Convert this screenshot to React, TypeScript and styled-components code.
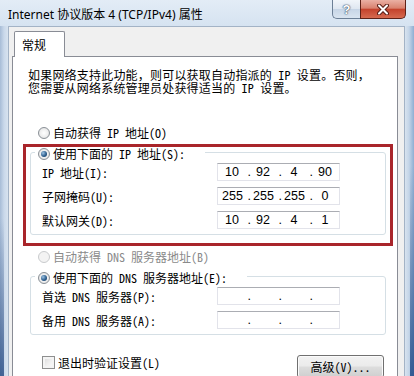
import React from "react";
import styled, { createGlobalStyle } from "styled-components";

const CJK = `"Noto Sans Mono CJK SC", "Noto Sans CJK SC", sans-serif`;

const Global = createGlobalStyle`
  html, body { margin: 0; padding: 0; background: #cfdcec; }
  body { width: 414px; height: 376px; overflow: hidden; }
  * { box-sizing: border-box; }
`;

const Window = styled.div`
  position: relative;
  width: 414px;
  height: 376px;
  overflow: hidden;
  display: flex;
  flex-direction: column;
  background: linear-gradient(180deg, #dce7f3 0%, #cddbeb 50%, #b9cce3 100%);
  font-family: ${CJK};
  font-size: 12px;
  color: #000;
`;

const TitleBar = styled.div`
  flex: none;
  height: 26px;
  display: flex;
  align-items: flex-start;
  padding: 0 8px 0 8px;
  background: linear-gradient(180deg, #e3ecf6 0%, #d6e3f1 100%);
`;

const Title = styled.div`
  flex: 1;
  margin-top: 7px;
  font-family: "Noto Sans", "Noto Sans CJK SC", sans-serif;
  font-size: 12px;
  line-height: 16px;
  color: #000;
  white-space: nowrap;
`;

const CaptionButtons = styled.div`
  display: flex;
  flex: none;
`;

const HelpButton = styled.div`
  width: 28px;
  height: 19px;
  border: 1px solid #6c7f96;
  border-top: none;
  border-right: none;
  border-bottom-left-radius: 5px;
  background: linear-gradient(180deg, #f1f5fa 0%, #dfe7f1 48%, #c7d5e6 52%, #d9e4f0 100%);
  display: flex;
  align-items: center;
  justify-content: center;
  font-family: "Liberation Sans", Arial, sans-serif;
  font-weight: bold;
  font-size: 13px;
  color: #fff;
  text-shadow: 0 0 1px #3b4d63, 0 0 1px #3b4d63, 0 0 2px #6a7a8e;
`;

const CloseButton = styled.div`
  width: 46px;
  height: 19px;
  border: 1px solid #5e2218;
  border-top: none;
  border-bottom-right-radius: 5px;
  background: linear-gradient(180deg, #eab0a4 0%, #d9826f 45%, #c4432d 52%, #d66a50 100%);
  display: flex;
  align-items: center;
  justify-content: center;
`;

const Body = styled.div`
  flex: 1;
  display: flex;
  min-height: 0;
`;

const LeftFrame = styled.div`
  flex: none;
  width: 8px;
  background:
    linear-gradient(180deg, rgba(60, 95, 145, 0) 55%, rgba(45, 80, 135, 0.85) 100%) 0 0 / 4px 100% no-repeat,
    linear-gradient(90deg, #a7bcd6 0px, #c9d8ea 4px, #d8e3ef 8px);
`;

const RightFrame = styled.div`
  flex: none;
  width: 9px;
  background:
    linear-gradient(180deg, rgba(60, 95, 145, 0) 40%, rgba(40, 80, 140, 0.9) 100%) 5px 0 / 4px 100% no-repeat,
    linear-gradient(90deg, #d8e3ef 0px, #c4d5e8 4px, #8eaed2 9px);
`;

const Client = styled.div`
  flex: 1;
  min-width: 0;
  background: #f0f0f0;
  border: 1px solid #a3b3c6;
  border-bottom: none;
  padding: 4px 6px 0 3px;
  display: flex;
  flex-direction: column;
`;

const TabStrip = styled.div`
  display: flex;
  padding-left: 2px;
  position: relative;
  z-index: 1;
  margin-bottom: -1px;
`;

const Tab = styled.div`
  width: 51px;
  height: 26px;
  background: #fff;
  border: 1px solid #898c95;
  border-bottom: none;
  border-radius: 2px 2px 0 0;
  padding-left: 7px;
  display: flex;
  align-items: center;
  font-size: 12px;
`;

const Panel = styled.div`
  flex: 1;
  background: #fff;
  border: 1px solid #898c95;
  border-bottom: none;
  display: flex;
  flex-direction: column;
`;

const Intro = styled.div`
  margin: 11px 0 0 15px;
  display: flex;
  flex-direction: column;
`;

const IntroLine = styled.div`
  height: 13px;
  line-height: 13px;
  white-space: nowrap;
  letter-spacing: 0.2px;
`;

const OptionRow = styled.div<{ $mt: number; $disabled?: boolean }>`
  display: flex;
  align-items: center;
  gap: 3px;
  height: 14px;
  line-height: 14px;
  margin: ${(p) => p.$mt}px 0 0 25px;
  color: ${(p) => (p.$disabled ? "#8a8a8a" : "#000")};
  white-space: nowrap;
`;

const Radio = styled.span<{ $checked?: boolean; $disabled?: boolean }>`
  flex: none;
  width: 12px;
  height: 12px;
  border-radius: 50%;
  border: 1px solid ${(p) => (p.$disabled ? "#c9cbcd" : "#8a9096")};
  background: ${(p) =>
    p.$disabled
      ? "#f3f3f3"
      : "radial-gradient(circle at 50% 50%, #ffffff 0, #eeeeee 55%, #d2d4d6 100%)"};
  display: flex;
  align-items: center;
  justify-content: center;
  &::after {
    content: "";
    display: ${(p) => (p.$checked ? "block" : "none")};
    width: 6px;
    height: 6px;
    border-radius: 50%;
    background: radial-gradient(circle at 35% 35%, #9cc3e3 0, #2f5f8e 55%, #0f3459 100%);
  }
`;

const Group = styled.fieldset`
  margin: 5px 11px 0 17px;
  padding: 4px 10px 5px 11px;
  border: 1px solid #d5dfe5;
  border-radius: 3px;
  min-width: 0;
`;

const Legend = styled.legend`
  margin-left: -7px;
  padding: 0 20px 0 3px;
  height: 14px;
  line-height: 14px;
`;

const LegendInner = styled.span`
  display: inline-flex;
  align-items: center;
  gap: 3px;
  height: 14px;
  white-space: nowrap;
`;

const Rows = styled.div`
  display: flex;
  flex-direction: column;
  gap: 6px;
`;

const FieldRow = styled.div`
  display: flex;
  align-items: center;
  height: 18px;
`;

const FieldLabel = styled.span`
  flex: none;
  width: 175px;
  white-space: nowrap;
`;

const IpBox = styled.div`
  flex: none;
  width: 123px;
  height: 18px;
  border: 1px solid #e2e3ea;
  border-top-color: #abadb3;
  background: #fff;
  display: flex;
  align-items: center;
  padding-left: 4px;
  font-family: "Liberation Sans", Arial, sans-serif;
  font-size: 12.5px;
  line-height: 16px;
  color: #000;
`;

const Octet = styled.span`
  width: 20px;
  text-align: center;
`;

const Dot = styled.span`
  width: 11px;
  text-align: right;
  padding-right: 2px;
`;

const Footer = styled.div`
  display: flex;
  justify-content: space-between;
  align-items: flex-start;
  margin: 20px 13px 0 29px;
`;

const CheckLabel = styled.div`
  display: flex;
  align-items: center;
  gap: 3px;
  height: 13px;
  margin-top: 1px;
  line-height: 13px;
  white-space: nowrap;
`;

const CheckBox = styled.span`
  flex: none;
  width: 13px;
  height: 13px;
  border: 1px solid #8e8f8f;
  background: linear-gradient(135deg, #d8d8d8 0%, #eeeeee 50%, #ffffff 100%);
  box-shadow: inset 0 0 0 2px #f4f4f4;
`;

const Button = styled.div`
  width: 87px;
  height: 23px;
  border: 1px solid #707070;
  border-radius: 3px;
  background: linear-gradient(180deg, #f2f2f2 0%, #ebebeb 48%, #dddddd 52%, #cfcfcf 100%);
  box-shadow: inset 0 0 0 1px #fbfbfb;
  display: flex;
  align-items: center;
  justify-content: center;
  white-space: nowrap;
`;

const Highlight = styled.div`
  position: absolute;
  left: 23px;
  top: 144px;
  width: 370px;
  height: 102px;
  border: 3px solid #a9252a;
  pointer-events: none;
`;

function IpField({ parts }: { parts: string[] }) {
  return (
    <IpBox>
      {parts.map((p, i) => (
        <React.Fragment key={i}>
          <Octet>{p}</Octet>
          {i < 3 && <Dot>.</Dot>}
        </React.Fragment>
      ))}
    </IpBox>
  );
}

export default function App() {
  return (
    <>
      <Global />
      <Window>
        <TitleBar>
          <Title>Internet 协议版本 4 (TCP/IPv4) 属性</Title>
          <CaptionButtons>
            <HelpButton>?</HelpButton>
            <CloseButton>
              <svg width="12" height="11" viewBox="0 0 12 11">
                <path d="M2 1.5 L10 9.5 M10 1.5 L2 9.5" stroke="#5a1e16" strokeWidth="4" strokeLinecap="round" />
                <path d="M2 1.5 L10 9.5 M10 1.5 L2 9.5" stroke="#ffffff" strokeWidth="2" strokeLinecap="round" />
              </svg>
            </CloseButton>
          </CaptionButtons>
        </TitleBar>
        <Body>
          <LeftFrame />
          <Client>
            <TabStrip>
              <Tab>常规</Tab>
            </TabStrip>
            <Panel>
              <Intro>
                <IntroLine>如果网络支持此功能，则可以获取自动指派的 IP 设置。否则，</IntroLine>
                <IntroLine>您需要从网络系统管理员处获得适当的 IP 设置。</IntroLine>
              </Intro>
              <OptionRow $mt={32}>
                <Radio />
                自动获得 IP 地址(O)
              </OptionRow>
              <Group>
                <Legend>
                  <LegendInner>
                    <Radio $checked />
                    使用下面的 IP 地址(S):
                  </LegendInner>
                </Legend>
                <Rows>
                  <FieldRow>
                    <FieldLabel>IP 地址(I):</FieldLabel>
                    <IpField parts={["10", "92", "4", "90"]} />
                  </FieldRow>
                  <FieldRow>
                    <FieldLabel>子网掩码(U):</FieldLabel>
                    <IpField parts={["255", "255", "255", "0"]} />
                  </FieldRow>
                  <FieldRow>
                    <FieldLabel>默认网关(D):</FieldLabel>
                    <IpField parts={["10", "92", "4", "1"]} />
                  </FieldRow>
                </Rows>
              </Group>
              <OptionRow $mt={15} $disabled>
                <Radio $disabled />
                自动获得 DNS 服务器地址(B)
              </OptionRow>
              <Group>
                <Legend>
                  <LegendInner>
                    <Radio $checked />
                    使用下面的 DNS 服务器地址(E):
                  </LegendInner>
                </Legend>
                <Rows>
                  <FieldRow>
                    <FieldLabel>首选 DNS 服务器(P):</FieldLabel>
                    <IpField parts={["", "", "", ""]} />
                  </FieldRow>
                  <FieldRow>
                    <FieldLabel>备用 DNS 服务器(A):</FieldLabel>
                    <IpField parts={["", "", "", ""]} />
                  </FieldRow>
                </Rows>
              </Group>
              <Footer>
                <CheckLabel>
                  <CheckBox />
                  退出时验证设置(L)
                </CheckLabel>
                <Button>高级(V)...</Button>
              </Footer>
            </Panel>
          </Client>
          <RightFrame />
        </Body>
        <Highlight />
      </Window>
    </>
  );
}
